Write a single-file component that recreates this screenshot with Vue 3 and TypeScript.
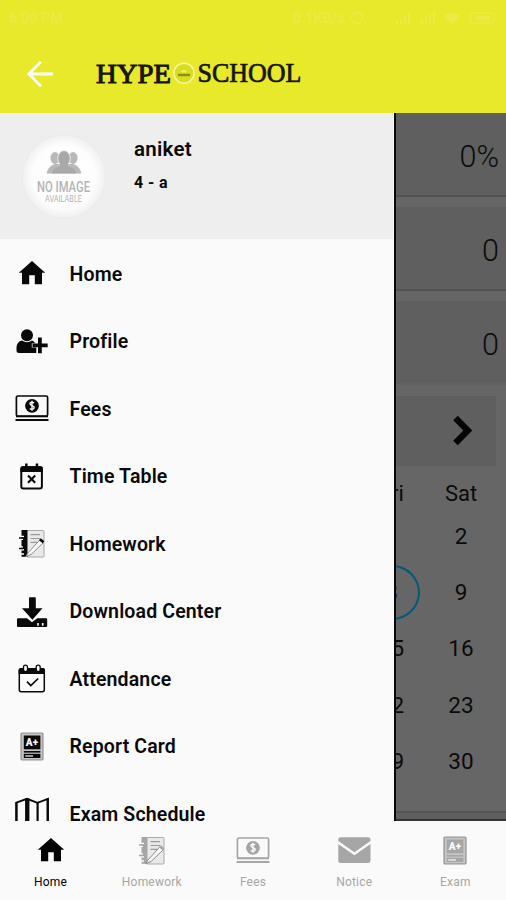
<script setup lang="ts">
interface Item { label: string; icon: string }

const menu: Item[] = [
  { label: 'Home', icon: 'home' },
  { label: 'Profile', icon: 'profile' },
  { label: 'Fees', icon: 'fees' },
  { label: 'Time Table', icon: 'timetable' },
  { label: 'Homework', icon: 'homework' },
  { label: 'Download Center', icon: 'download' },
  { label: 'Attendance', icon: 'attendance' },
  { label: 'Report Card', icon: 'report' },
  { label: 'Exam Schedule', icon: 'map' },
]

const tabs: Item[] = [
  { label: 'Home', icon: 'home' },
  { label: 'Homework', icon: 'homework' },
  { label: 'Fees', icon: 'fees' },
  { label: 'Notice', icon: 'notice' },
  { label: 'Exam', icon: 'report' },
]

const stats: string[] = ['0%', '0', '0']
const weeks: [string, string][] = [['', '2'], ['8', '9'], ['15', '16'], ['22', '23'], ['29', '30']]
const today = '8'
</script>

<template>
  <div class="screen">
    <svg class="sprite" width="0" height="0">
      <defs>
        <symbol id="home" viewBox="0 0 36 36">
          <path fill="currentColor" d="M18 6 L31.2 17.7 H28 V29.3 H20.8 V20.2 H15.2 V29.3 H8 V17.7 H4.8 Z" />
        </symbol>
        <symbol id="profile" viewBox="0 0 36 36">
          <g fill="currentColor">
            <circle cx="13" cy="12.2" r="6" />
            <path d="M8 17.5 Q13 21 18 17.5 Q20.5 18.5 21.2 20.2 H17.8 V24.6 H22.3 V30 H5 Q2.5 30 2.5 27.5 V24 Q3 18.5 8 17.5 Z" />
            <path d="M24 14.5 H27.8 V20.6 H33.7 V24.2 H27.8 V30.2 H24 V24.2 H18.5 V20.6 H24 Z" />
          </g>
        </symbol>
        <symbol id="fees" viewBox="0 0 36 36">
          <rect x="2.4" y="6" width="31.2" height="20" rx="1.6" fill="none" stroke="currentColor" stroke-width="1.7" />
          <path d="M1.5 30 H34.5" stroke="currentColor" stroke-width="2.2" />
          <path d="M2 26.5 H34" stroke="currentColor" stroke-width="1.6" />
          <circle cx="18" cy="15.8" r="6.9" fill="currentColor" />
          <path d="M20.2 13 Q18 11.6 16.3 12.7 Q15.3 14.6 18 15.6 Q21 16.8 19.8 18.5 Q18 19.9 15.7 18.6 M18 10.7 V20.8" fill="none" stroke="#fafafa" stroke-width="1.4" />
        </symbol>
        <symbol id="timetable" viewBox="0 0 36 36">
          <rect x="7.3" y="9.2" width="20.6" height="21.4" rx="2" fill="none" stroke="currentColor" stroke-width="2" />
          <path fill="currentColor" d="M6.4 14 V10 Q6.4 8.3 8.4 8.3 H11.1 V5.5 H13.6 V8.3 H21.7 V5.5 H24.2 V8.3 H26.9 Q28.8 8.3 28.8 10 V14 Z" />
          <path d="M14 17.6 L21.2 24.8 M21.2 17.6 L14 24.8" stroke="currentColor" stroke-width="2.1" />
        </symbol>
        <symbol id="homework" viewBox="0 0 36 36">
          <rect x="12.5" y="5.5" width="17.5" height="26.5" rx="1" fill="#e9e9e9" stroke="#a9a9a9" stroke-width="1" />
          <path d="M7.5 5 H13.5 V31.8 H7.5 Z" fill="currentColor" />
          <path d="M4.5 11.5 H10 M4.5 14.3 H9 M4.5 22 H9 M4.5 24.8 H10 M7 29 H10" stroke="#fafafa" stroke-width="1.4" />
          <path d="M5 13 H9.5 M5 23.5 H9.5" stroke="currentColor" stroke-width="1.6" />
          <path d="M16.5 9.7 H26 M16.5 13.5 H26 M16.5 17.3 H23" stroke="#9b9b9b" stroke-width="1.2" />
          <path d="M14.2 27.8 L25.7 15 L29.2 17.8 L17.2 29.4 L11.8 31.6 Z" fill="#fafafa" stroke="#8b8b8b" stroke-width="1" />
          <path d="M25 15.2 L26.8 13.2 L30.4 16.2 L28.6 18.2 Z" fill="currentColor" />
        </symbol>
        <symbol id="download" viewBox="0 0 36 36">
          <path fill="currentColor" d="M4 25.3 H13 L18 29.2 L23.2 25.3 H32.2 Q33.2 25.3 33.2 26.3 V33 Q33.2 34 32.2 34 H4 Q3 34 3 33 V26.3 Q3 25.3 4 25.3 Z" />
          <path fill="currentColor" d="M15 5.2 Q15 4.3 16 4.3 H20.8 Q21.8 4.3 21.8 5.2 V15.3 H28.5 L18.4 26.7 L8 15.3 H15 Z" />
          <path d="M24 30 V32.7 M28.7 30 V32.7" stroke="#fafafa" stroke-width="1.6" />
        </symbol>
        <symbol id="attendance" viewBox="0 0 36 36">
          <rect x="5.3" y="9" width="25" height="22.8" rx="2" fill="none" stroke="currentColor" stroke-width="1.5" />
          <path fill="currentColor" d="M4.6 14 V9.8 Q4.6 8 6.6 8 H29 Q31 8 31 9.8 V14 Z" />
          <rect x="9.5" y="5.2" width="4" height="6.4" rx="2" fill="#fafafa" stroke="currentColor" stroke-width="1.3" />
          <rect x="22.2" y="5.2" width="4" height="6.4" rx="2" fill="#fafafa" stroke="currentColor" stroke-width="1.3" />
          <path d="M13 21.6 L16.8 25.6 L24.2 18.5" fill="none" stroke="currentColor" stroke-width="1.7" />
        </symbol>
        <symbol id="report" viewBox="0 0 36 36">
          <rect x="7" y="5" width="22" height="27" rx="1" fill="#c6c6c6" stroke="#777" stroke-opacity=".75" stroke-width="1.2" />
          <rect x="9.8" y="7.5" width="16.6" height="13.8" fill="currentColor" />
          <path d="M9.8 23.8 H26.4" stroke="currentColor" stroke-width="1.6" />
          <rect x="9.8" y="25.8" width="16.6" height="4.2" fill="currentColor" />
          <path d="M11.2 28 H19" stroke="#fafafa" stroke-width="1.2" />
          <text class="grade" x="18" y="18" text-anchor="middle">A+</text>
        </symbol>
        <symbol id="map" viewBox="0 0 36 36">
          <path d="M2.3 32 V7.6 L13 3.8 L23.5 7.8 L34 3.8 V27 L23.5 31 L13 27 Z" fill="none" stroke="currentColor" stroke-width="1.8" />
          <path d="M2.5 7 V32 M12.2 3.5 V30 M14.3 3.5 V30 M23.6 7.5 V31 M33.6 3.5 V30" stroke="currentColor" stroke-width="2.2" />
        </symbol>
        <symbol id="notice" viewBox="0 0 36 36">
          <path fill="currentColor" d="M4.5 5.3 H32 Q34.5 5.3 34.5 7.5 V9 L18.4 20.2 L2.3 9 V7.5 Q2.3 5.3 4.5 5.3 Z" />
          <path fill="currentColor" d="M2.3 12 L18.4 23.3 L34.5 12 V28.8 Q34.5 31 32 31 H4.5 Q2.3 31 2.3 28.8 Z" />
        </symbol>
      </defs>
    </svg>

    <header class="topbar">
      <div class="status">
        <span>6:00 PM</span>
        <span class="status-right">
          <span class="rate">0.1KB/s</span>
          <svg width="14" height="14" viewBox="0 0 14 14"><circle cx="7" cy="7" r="5.5" fill="none" stroke="currentColor" stroke-width="1.5" /></svg>
          <svg class="signals" width="102" height="14" viewBox="0 0 102 14">
            <path d="M1 13V10M5 13V8M9 13V5M13 13V2M26 13V9M30 13V6M34 13V3M38 13V1" stroke="currentColor" stroke-width="2" />
            <path d="M48 5Q56 -2 64 5L56 13Z" fill="currentColor" />
            <rect x="75" y="2" width="23" height="10" rx="2" fill="none" stroke="currentColor" stroke-width="1.5" />
            <path d="M80 7H94" stroke="currentColor" stroke-width="5" />
          </svg>
        </span>
      </div>
      <div class="brand-row">
        <svg class="back" width="28" height="28" viewBox="0 0 28 28">
          <path d="M15 1.8 L2.8 14 L15 26.2 M2.8 14 H27" fill="none" stroke="#fff" stroke-width="2.8" />
        </svg>
        <svg class="logo" width="220" height="36" viewBox="0 0 220 36">
          <text class="wordmark" x="1" y="26.7" textLength="75" lengthAdjust="spacingAndGlyphs">HYPE</text>
          <circle cx="89" cy="17.2" r="10" fill="#d9dc20" stroke="#f6f6a0" stroke-width="1.6" />
          <path d="M83 19 H95" stroke="#8b8e1c" stroke-width="2.4" />
          <path d="M86.5 15.2 H91.5" stroke="#f2f35a" stroke-width="2" />
          <text class="wordmark wordmark-light" x="102.5" y="26.2" textLength="104" lengthAdjust="spacingAndGlyphs">SCHOOL</text>
        </svg>
      </div>
    </header>

    <div class="body">
      <aside class="drawer">
        <div class="user">
          <svg class="avatar" width="86" height="86" viewBox="0 0 86 86">
            <defs>
              <radialGradient id="disc"><stop offset="0" stop-color="#fff" /><stop offset=".75" stop-color="#fdfdfd" /><stop offset=".97" stop-color="#f1f1f1" /><stop offset="1" stop-color="#e6e6e6" /></radialGradient>
            </defs>
            <circle cx="43" cy="43.5" r="42" fill="url(#disc)" />
            <g fill="#b8b8b8">
              <ellipse cx="34" cy="25" rx="4.5" ry="6" /><ellipse cx="52" cy="25" rx="4.5" ry="6" />
              <path d="M25.5 40.5 Q27 33 34 31 H52 Q59 33 60.5 40.5 Z" />
            </g>
            <ellipse cx="43" cy="25.5" rx="6.3" ry="8" fill="#a9a9a9" stroke="#fff" stroke-width=".8" />
            <path d="M31 40.5 Q32 35 39 33.3 V29 H47 V33.3 Q54 35 55 40.5 Z" fill="#a9a9a9" />
            <text class="noimg" x="16" y="59" textLength="53" lengthAdjust="spacingAndGlyphs">NO IMAGE</text>
            <text class="avail" x="24" y="69" textLength="37" lengthAdjust="spacingAndGlyphs">AVAILABLE</text>
          </svg>
          <div class="who">
            <div class="name">aniket</div>
            <div class="grade-line">4 - a</div>
          </div>
        </div>
        <nav class="menu">
          <a v-for="item in menu" :key="item.label" class="row">
            <svg class="icon"><use :href="`#${item.icon}`" /></svg>
            <span>{{ item.label }}</span>
          </a>
        </nav>
      </aside>

      <main class="dimmed">
        <div v-for="(value, i) in stats" :key="i" class="stat">{{ value }}</div>
        <div class="month">
          <svg width="22" height="32" viewBox="0 0 22 32"><path d="M3.5 3 L15.8 15.5 L3.5 28" fill="none" stroke="#050505" stroke-width="6.4" /></svg>
        </div>
        <div class="week head"><span>Fri</span><span>Sat</span></div>
        <div v-for="week in weeks" :key="week[1]" class="week">
          <span :class="{ today: week[0] === today }">{{ week[0] }}</span>
          <span>{{ week[1] }}</span>
        </div>
        <div class="edge"></div>
      </main>
    </div>

    <nav class="tabs">
      <a v-for="(tab, i) in tabs" :key="tab.label" class="tab" :class="{ active: i === 0 }">
        <svg class="icon"><use :href="`#${tab.icon}`" /></svg>
        <span>{{ tab.label }}</span>
      </a>
    </nav>
  </div>
</template>

<style>
body { margin: 0; background: #fafafa; }
</style>

<style scoped>
.screen { width: 506px; height: 900px; display: flex; flex-direction: column; overflow: hidden; background: #fafafa; font-family: Roboto, sans-serif; color: #090909; }
.sprite { position: absolute; }
.topbar { height: 113px; flex: none; background: #e8e92b; }
.status { height: 36px; box-sizing: border-box; padding: 0 8px 0 9px; display: flex; align-items: center; justify-content: space-between; color: #ecea46; font-size: 14.5px; font-weight: 500; }
.status-right { display: flex; align-items: center; }
.rate { margin-right: 5px; }
.signals { margin-left: 32px; }
.brand-row { height: 75px; display: flex; align-items: center; padding-left: 26px; }
.logo { margin-left: 41px; }
.wordmark { font-family: "Liberation Serif", serif; font-weight: 400; font-size: 28px; fill: #15150a; stroke: #15150a; stroke-width: 1px; }
.wordmark-light { font-size: 27px; stroke-width: .7px; }
.body { height: 708px; flex: none; display: flex; overflow: hidden; }
.drawer { width: 396px; height: 708px; flex: none; box-sizing: border-box; border-right: 2px solid #080808; overflow: hidden; background: #fafafa; }
.user { width: 393px; height: 126px; box-sizing: border-box; background: #eee; display: flex; padding: 20px 0 0 21px; }
.who { padding: 4px 0 0 27px; }
.name { font-size: 20.5px; font-weight: 600; line-height: 25px; letter-spacing: .25px; }
.grade-line { font-size: 16px; font-weight: 700; line-height: 20px; margin-top: 11px; letter-spacing: .4px; }
.noimg { font-family: Roboto, sans-serif; font-size: 14px; font-weight: 500; fill: #b4b4b4; }
.avail { font-family: Roboto, sans-serif; font-size: 9px; fill: #b4b4b4; }
.row { height: 67.5px; display: flex; align-items: center; padding: 1px 0 0 13.5px; box-sizing: border-box; font-size: 19.5px; font-weight: 600; letter-spacing: .15px; }
.row span { padding-top: 2px; }
.row .icon { margin-right: 20px; }
.icon { width: 36px; height: 36px; flex: none; }
.grade { font-family: Roboto, sans-serif; font-size: 10px; font-weight: 900; fill: #fafafa; }
.dimmed { flex: 1; display: flex; flex-direction: column; background: #666; color: #0b0b0b; overflow: hidden; }
.stat { height: 84px; flex: none; margin-bottom: 10px; box-sizing: border-box; background: #5f5f5f; border-bottom: 2px solid #525252; padding: 4px 7px 0 0; display: flex; align-items: center; justify-content: flex-end; font-size: 30.5px; font-weight: 350; }
.stat:nth-child(3) { margin-bottom: 11px; border-color: #626262; }
.month { height: 70px; flex: none; margin-right: 10px; background: #5f5f5f; display: flex; align-items: center; justify-content: flex-end; padding-right: 22px; box-sizing: border-box; }
.week { height: 56.2px; flex: none; margin-left: -37.5px; display: grid; grid-template-columns: 66px 73px; align-items: center; justify-content: start; font-size: 22.5px; text-align: center; }
.week span { display: block; line-height: 52px; }
.week span:first-child { width: 56px; justify-self: center; }
.week.head { height: 32px; padding-top: 10px; font-size: 22px; }
.week.head span { line-height: 36px; }
.week .today { box-sizing: border-box; height: 55px; line-height: 51px; border: 2px solid #075777; border-radius: 50%; }
.edge { margin-top: auto; height: 10px; flex: none; background: #5f5f5f; border-top: 2px solid #545454; border-bottom: 2px solid #333; box-sizing: border-box; }
.tabs { height: 79px; flex: none; display: grid; grid-template-columns: repeat(5, 1fr); background: #fafafa; }
.tab { display: flex; flex-direction: column; align-items: center; padding-top: 11px; font-size: 12px; color: #a6a6a6; letter-spacing: .2px; }
.tab span { line-height: 16px; margin-top: 6px; }
.tab.active { color: #000; }
</style>
